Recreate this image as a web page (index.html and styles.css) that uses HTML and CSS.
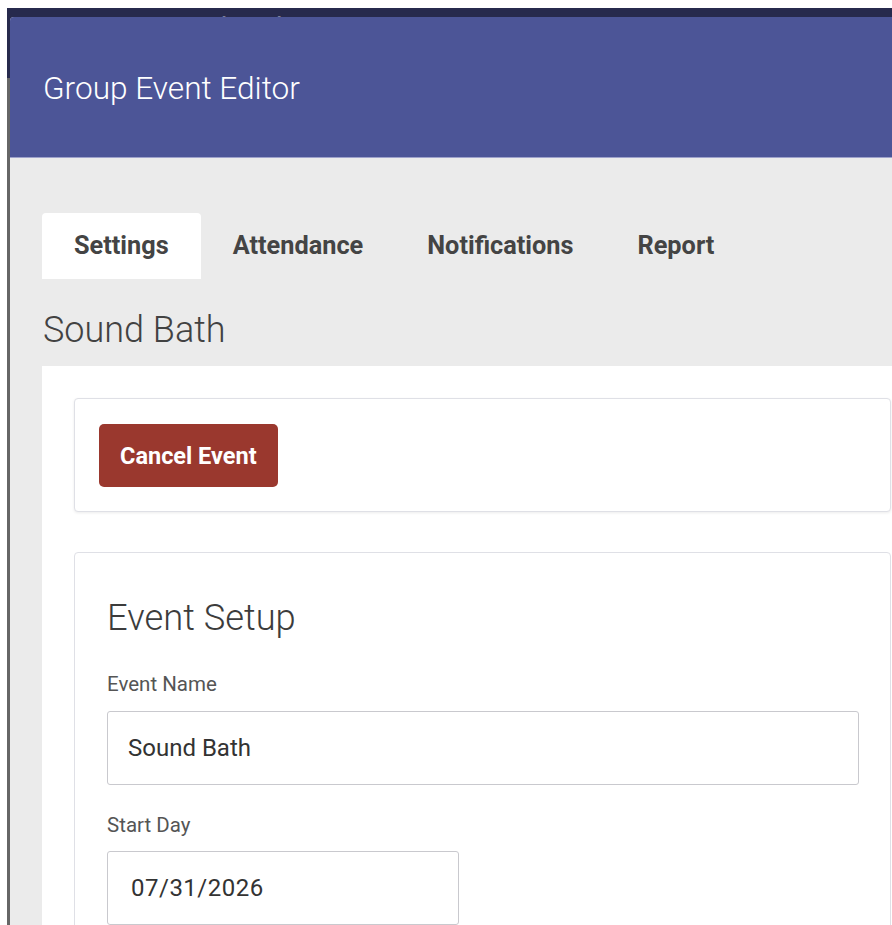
FILE: index.html
```html
<!DOCTYPE html>
<html lang="en">
<head>
<meta charset="utf-8">
<title>Group Event Editor</title>
<link rel="stylesheet" href="styles.css">
</head>
<body>
  <div class="page">
    <div class="page-nav"><span class="page-nav-title">Sound Bath</span></div>
    <div class="page-content"></div>
  </div>

  <div class="modal" role="dialog" aria-labelledby="modal-title">
    <header class="modal-header">
      <h1 id="modal-title" class="modal-title">Group Event Editor</h1>
    </header>

    <div class="modal-body">
      <nav class="tabs">
        <a class="tab tab-active" href="#">Settings</a>
        <a class="tab" href="#">Attendance</a>
        <a class="tab" href="#">Notifications</a>
        <a class="tab" href="#">Report</a>
      </nav>

      <h2 class="event-title">Sound Bath</h2>

      <div class="panel">
        <section class="card card-actions">
          <button class="btn-danger" type="button">Cancel Event</button>
        </section>

        <section class="card card-form">
          <h3 class="card-title">Event Setup</h3>

          <label class="field-label" for="event-name">Event Name</label>
          <div class="input input-wide" id="event-name">Sound Bath</div>

          <label class="field-label field-label-spaced" for="start-day">Start Day</label>
          <div class="input input-date" id="start-day">07/31/2026</div>
        </section>
      </div>
    </div>
  </div>
</body>
</html>
```

FILE: styles.css
```css
* {
  box-sizing: border-box;
}

html,
body {
  margin: 0;
  height: 100%;
}

body {
  background: #ffffff;
  font-family: Roboto, "Noto Sans", "Liberation Sans", sans-serif;
  overflow: hidden;
  position: relative;
}

/* dimmed page behind the dialog */
.page {
  margin: 8px 0 0 7px;
  height: calc(100% - 8px);
  display: flex;
  flex-direction: column;
}

.page-nav {
  height: 70px;
  background: #272a4d;
  padding-left: 141px;
  overflow: hidden;
}

.page-nav-title {
  display: block;
  font-size: 28px;
  line-height: 28px;
  margin-top: 6px;
  color: #7d7f98;
}

.page-content {
  flex: 1;
  background: #666666;
}

/* dialog */
.modal {
  position: absolute;
  left: 10px;
  top: 17px;
  width: 945px;
  bottom: -40px;
  border-radius: 4px 4px 0 0;
  overflow: hidden;
  background: #ebebeb;
}

.modal-header {
  height: 141px;
  background: #4c5597;
  border-bottom: 1px solid #9ea2cb;
  display: flex;
  align-items: center;
  padding: 0 32px 0 33px;
}

.modal-title {
  margin: 0;
  font-size: 31.6px;
  font-weight: 300;
  color: #ffffff;
  padding-top: 2px;
}

.modal-body {
  padding: 55px 32px 0 32px;
}

/* tabs */
.tabs {
  display: flex;
  height: 66px;
}

.tab {
  display: block;
  padding: 0 32px;
  line-height: 66px;
  font-size: 25.3px;
  font-weight: 700;
  color: #444444;
  text-decoration: none;
  border-radius: 4px 4px 0 0;
}

.tab-active {
  background: #ffffff;
}

.event-title {
  margin: 30px 0 14px 1px;
  font-size: 36px;
  line-height: 43px;
  font-weight: 300;
  color: #424242;
}

/* white content panel */
.panel {
  background: #ffffff;
  padding: 32px;
  display: flex;
  flex-direction: column;
  gap: 40px;
}

.card {
  background: #ffffff;
  border: 1px solid #dfe0e6;
  border-radius: 4px;
  box-shadow: 0 1px 3px rgba(0, 0, 0, 0.08);
}

.card-actions {
  padding: 25px 24px 24px 24px;
}

.btn-danger {
  display: block;
  height: 63px;
  padding: 0 21px;
  border: 0;
  border-radius: 5px;
  background: #9a382e;
  color: #ffffff;
  font-family: inherit;
  font-size: 23.5px;
  font-weight: 700;
}

.card-form {
  padding: 43px 32px 40px 32px;
  box-shadow: none;
}

.card-title {
  margin: 0 0 33px 0;
  font-size: 36.3px;
  line-height: 43px;
  font-weight: 300;
  color: #3c3c3c;
}

.field-label {
  display: block;
  font-size: 20.5px;
  line-height: 24px;
  color: #555555;
  margin-bottom: 15px;
}

.field-label-spaced {
  margin-top: 28px;
  margin-bottom: 14px;
}

.input {
  height: 74px;
  border: 1px solid #c9c9ce;
  border-radius: 3px;
  display: flex;
  align-items: center;
  font-size: 24px;
  color: #333333;
}

.input-wide {
  width: 752px;
  padding-left: 20px;
}

.input-date {
  width: 352px;
  padding-left: 23px;
  letter-spacing: 0.5px;
}
```
